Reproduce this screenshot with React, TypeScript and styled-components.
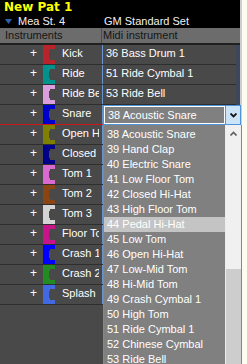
import React, { FC } from 'react';
import styled, { createGlobalStyle } from 'styled-components';

type Drum = {
  name: string;
  color: string;
  midi: string;
};

const drums: Drum[] = [
  { name: 'Kick', color: '#b8242a', midi: '36 Bass Drum 1' },
  { name: 'Ride', color: '#00928c', midi: '51 Ride Cymbal 1' },
  { name: 'Ride Bell', color: '#dc9ede', midi: '53 Ride Bell' },
  { name: 'Snare', color: '#0000cc', midi: '38 Acoustic Snare' },
  { name: 'Open Hi-Hat', color: '#808000', midi: '46 Open Hi-Hat' },
  { name: 'Closed Hi-Hat', color: '#000088', midi: '42 Closed Hi-Hat' },
  { name: 'Tom 1', color: '#d86ad0', midi: '48 Hi-Mid Tom' },
  { name: 'Tom 2', color: '#8b4513', midi: '47 Low-Mid Tom' },
  { name: 'Tom 3', color: '#d4d4d4', midi: '45 Low Tom' },
  { name: 'Floor Tom', color: '#c8148a', midi: '43 High Floor Tom' },
  { name: 'Crash 1', color: '#0000ff', midi: '49 Crash Cymbal 1' },
  { name: 'Crash 2', color: '#228b22', midi: '57 Crash Cymbal 2' },
  { name: 'Splash', color: '#4169e1', midi: '55 Splash Cymbal' },
];

const midiList = [
  '38 Acoustic Snare',
  '39 Hand Clap',
  '40 Electric Snare',
  '41 Low Floor Tom',
  '42 Closed Hi-Hat',
  '43 High Floor Tom',
  '44 Pedal Hi-Hat',
  '45 Low Tom',
  '46 Open Hi-Hat',
  '47 Low-Mid Tom',
  '48 Hi-Mid Tom',
  '49 Crash Cymbal 1',
  '50 High Tom',
  '51 Ride Cymbal 1',
  '52 Chinese Cymbal',
  '53 Ride Bell',
];

const EDIT_ROW = 3;
const HOVER_ITEM = '44 Pedal Hi-Hat';

const Swatch: FC<{ color: string }> = ({ color }) => (
  <SwatchBox width="12" height="19" viewBox="0 0 12 19">
    <rect x="0" y="0" width="12" height="19" fill={color} />
    <path d="M12 4H7V6H6V13H7V15H12Z" fill="#494949" />
  </SwatchBox>
);

const App: FC = () => {
  return (
    <Window>
      <GlobalStyle />
      <Panel>
        <TitleBar>
          <Title>New Pat 1</Title>
          <SubLine>
            <SubLeft>
              <svg width="7" height="5" viewBox="0 0 7 5">
                <path d="M0 0H7L3.5 5Z" fill="#2c62aa" />
              </svg>
              Mea St. 4
            </SubLeft>
            <SubRight>GM Standard Set</SubRight>
          </SubLine>
        </TitleBar>
        <HeaderRow>
          <HeadInstruments>Instruments</HeadInstruments>
          <HeadMidi>Midi instrument</HeadMidi>
        </HeaderRow>
        <Rows>
          {drums.map((drum, i) => (
            <Row key={drum.name} $marker={i === EDIT_ROW}>
              <PlusCell>+</PlusCell>
              <Swatch color={drum.color} />
              <NameCell>{drum.name}</NameCell>
              <MidiCell>{i < EDIT_ROW ? drum.midi : ''}</MidiCell>
            </Row>
          ))}
        </Rows>
      </Panel>

      <Editor>
        <Combo>
          <Field>38 Acoustic Snare</Field>
          <DropButton>
            <svg width="7" height="5" viewBox="0 0 7 5">
              <path d="M0.5 0.5L3.5 3.5L6.5 0.5" fill="none" stroke="#141414" strokeWidth="1.8" />
            </svg>
          </DropButton>
        </Combo>
        <List>
          <Items>
            {midiList.map(item => (
              <Item key={item} $active={item === HOVER_ITEM}>
                {item}
              </Item>
            ))}
          </Items>
          <ScrollBar>
            <ScrollUp>
              <svg width="7" height="5" viewBox="0 0 7 5">
                <path d="M0.5 4.5L3.5 1.5L6.5 4.5" fill="none" stroke="#606060" strokeWidth="1.6" />
              </svg>
            </ScrollUp>
            <ScrollTrack />
            <ScrollThumb />
          </ScrollBar>
        </List>
      </Editor>
    </Window>
  );
};

export default App;

const GlobalStyle = createGlobalStyle`
  html, body {
    margin: 0;
    padding: 0;
    background: #fdfcf0;
  }
  body {
    font-family: "Liberation Sans", Arial, sans-serif;
    font-size: 11px;
  }
`;

const Window = styled.div`
  position: relative;
  width: 243px;
  height: 364px;
  overflow: hidden;
  display: flex;
`;

const Panel = styled.div`
  width: 240px;
  display: flex;
  flex-direction: column;
  background: #494949;
  border-right: 2px solid #cfcfcf;
`;

const TitleBar = styled.header`
  background: #000;
`;

const Title = styled.div`
  height: 14px;
  line-height: 13px;
  padding-left: 4px;
  color: #ffff00;
  font: bold 12px "DejaVu Sans", sans-serif;
`;

const SubLine = styled.div`
  display: flex;
  height: 14px;
  line-height: 14px;
  color: #f2f2f2;
`;

const SubLeft = styled.div`
  width: 102px;
  display: flex;
  align-items: center;
  gap: 6px;
  padding-left: 5px;
  box-sizing: border-box;
`;

const SubRight = styled.div`
  padding-left: 2px;
`;

const HeaderRow = styled.div`
  display: flex;
  height: 15px;
  line-height: 15px;
  background: #6c6c6c;
  color: #151515;
  border-bottom: 2px solid #202020;
`;

const HeadInstruments = styled.div`
  width: 102px;
  padding-left: 5px;
  box-sizing: border-box;
  border-right: 1px solid #c81818;
`;

const HeadMidi = styled.div`
  padding-left: 1px;
`;

const Rows = styled.div`
  flex: 1;
  border-right: 4px solid #3c475a;
`;

const Row = styled.div<{ $marker?: boolean }>`
  display: flex;
  height: 19px;
  color: #fff;
  border-bottom: 1px solid ${p => (p.$marker ? '#c81818' : '#2e2e2e')};
`;

const PlusCell = styled.div`
  width: 43px;
  padding-left: 30px;
  box-sizing: border-box;
  font-size: 12px;
  line-height: 16px;
`;

const SwatchBox = styled.svg`
  display: block;
  flex: none;
`;

const NameCell = styled.div`
  width: 44px;
  margin-right: 3px;
  padding-left: 7px;
  box-sizing: border-box;
  line-height: 16px;
  white-space: nowrap;
  overflow: hidden;
`;

const MidiCell = styled.div`
  flex: 1;
  padding-left: 3px;
  line-height: 16px;
  border-left: 1px solid #6a92cc;
  white-space: nowrap;
  overflow: hidden;
`;

const Editor = styled.div`
  position: absolute;
  left: 103px;
  top: 105px;
  width: 139px;
  color: #fff;
`;

const Combo = styled.div`
  display: flex;
  width: 138px;
  height: 20px;
  box-sizing: border-box;
  border: 1px solid #4d94db;
  background: #808080;
`;

const Field = styled.div`
  flex: 1;
  border: 1px solid #fff;
  padding-left: 3px;
  line-height: 16px;
`;

const DropButton = styled.div`
  width: 14px;
  display: flex;
  align-items: center;
  justify-content: center;
  background: #cce4f7;
  border-left: 1px solid #4d94db;
`;

const List = styled.div`
  display: flex;
  background: #808080;
  border-left: 1px solid #4d94db;
  border-right: 1px solid #4d94db;
`;

const Items = styled.div`
  width: 121px;
  padding-top: 2px;
`;

const Item = styled.div<{ $active?: boolean }>`
  height: 15px;
  line-height: 15px;
  padding-left: 3px;
  white-space: nowrap;
  background: ${p => (p.$active ? '#c4c4c4' : 'transparent')};
`;

const ScrollBar = styled.div`
  width: 15px;
  display: flex;
  flex-direction: column;
  background: #f0f0f0;
  border-left: 1px solid #ececec;
`;

const ScrollUp = styled.div`
  height: 17px;
  display: flex;
  align-items: center;
  justify-content: center;
`;

const ScrollTrack = styled.div`
  height: 127px;
`;

const ScrollThumb = styled.div`
  flex: 1;
  background: #cdcdcd;
`;
